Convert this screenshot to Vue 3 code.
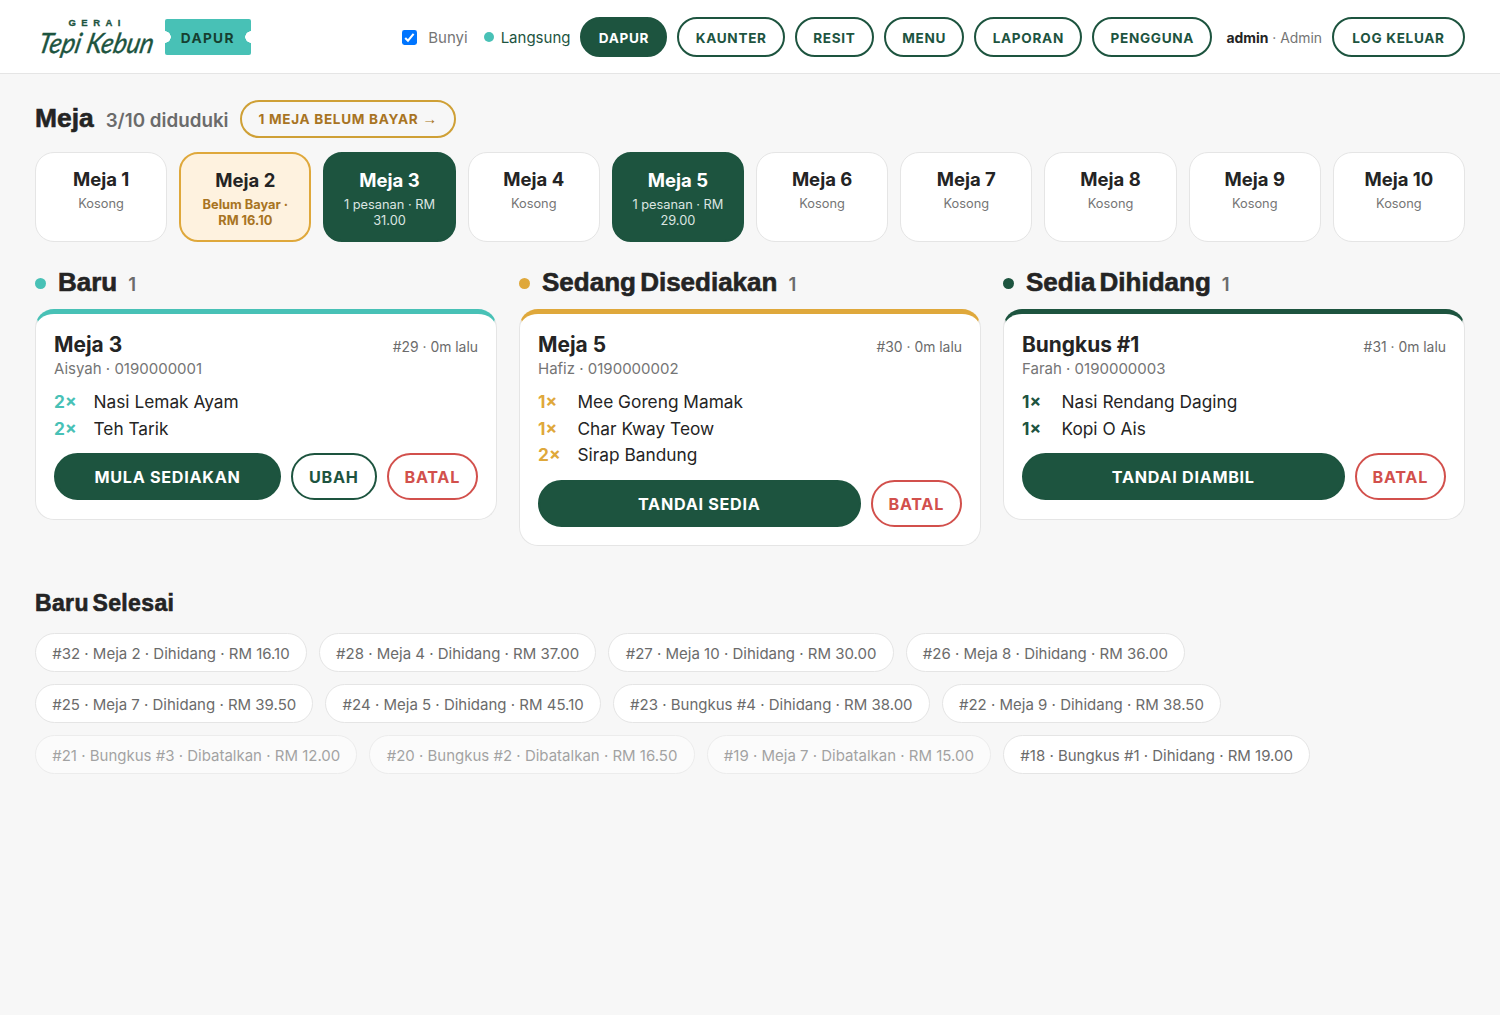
<template>
  <div class="page">
    <header class="topbar">
      <div class="brand">
        <svg class="logo" width="120" height="50" viewBox="0 0 120 50">
          <text class="logoSmall" x="33.5" y="13.5" textLength="52">GERAI</text>
          <text
            class="logoScript"
            transform="translate(2 41) skewX(-12)"
            textLength="115"
            lengthAdjust="spacingAndGlyphs"
          >Tepi Kebun</text>
        </svg>
        <span class="ticket">DAPUR</span>
      </div>
      <nav class="nav">
        <label class="sound">
          <input v-model="bunyi" type="checkbox" class="checkInput" />
          <svg class="check" width="15" height="15" viewBox="0 0 15 15">
            <rect width="15" height="15" rx="2.4" :fill="bunyi ? '#0075ff' : '#bbb'" />
            <path v-if="bunyi" d="M3.2 7.9 6 10.7 11.6 3.9" fill="none" stroke="#fff" stroke-width="2.1" />
          </svg>
          <span>Bunyi</span>
        </label>
        <span class="live"><i class="liveDot"></i>Langsung</span>
        <button
          v-for="m in menu"
          :key="m"
          class="navBtn"
          :class="{ active: m === halaman }"
          @click="halaman = m"
        >{{ m }}</button>
        <span class="user"><b>admin</b> · Admin</span>
        <button class="navBtn logout">Log Keluar</button>
      </nav>
    </header>

    <main class="content">
      <div class="mejaHead">
        <h2 class="display">Meja</h2>
        <span class="occupied">3/10 diduduki</span>
        <button class="unpaidBtn">1 Meja Belum Bayar <span class="arrow">→</span></button>
      </div>
      <div class="tables">
        <div v-for="t in meja" :key="t.no" class="table" :class="t.status">
          <strong>Meja {{ t.no }}</strong>
          <span>{{ t.info }}</span>
        </div>
      </div>

      <div class="board">
        <section v-for="k in kolum" :key="k.tajuk" class="column" :class="k.warna">
          <div class="columnHead">
            <i class="dot"></i>
            <h2 class="display">{{ k.tajuk }}</h2>
            <span class="count">1</span>
          </div>
          <article class="order">
            <div class="orderHead">
              <h3>{{ k.nama }}</h3>
              <span>#{{ k.id }} · 0m lalu</span>
            </div>
            <p class="customer">{{ k.pelanggan }}</p>
            <ul class="items">
              <li v-for="item in k.items" :key="item.nama"><b>{{ item.qty }}×</b>{{ item.nama }}</li>
            </ul>
            <div class="actions">
              <button class="btn primary">{{ k.aksi }}</button>
              <button v-if="k.ubah" class="btn edit">Ubah</button>
              <button class="btn danger">Batal</button>
            </div>
          </article>
        </section>
      </div>

      <h3 class="display doneTitle">Baru Selesai</h3>
      <div class="done">
        <span v-for="s in selesai" :key="s.id" class="chip" :class="{ cancelled: s.batal }">
          #{{ s.id }} · {{ s.nama }} · {{ s.batal ? 'Dibatalkan' : 'Dihidang' }} · RM {{ s.jumlah }}
        </span>
      </div>
    </main>
  </div>
</template>

<script setup>
import { ref } from "vue";

const bunyi = ref(true);
const halaman = ref("Dapur");
const menu = ["Dapur", "Kaunter", "Resit", "Menu", "Laporan", "Pengguna"];

const meja = ref([
  { no: 1, info: "Kosong" },
  { no: 2, info: "Belum Bayar · RM 16.10", status: "unpaid" },
  { no: 3, info: "1 pesanan · RM 31.00", status: "busy" },
  { no: 4, info: "Kosong" },
  { no: 5, info: "1 pesanan · RM 29.00", status: "busy" },
  { no: 6, info: "Kosong" },
  { no: 7, info: "Kosong" },
  { no: 8, info: "Kosong" },
  { no: 9, info: "Kosong" },
  { no: 10, info: "Kosong" },
]);

const kolum = ref([
  {
    tajuk: "Baru",
    warna: "teal",
    nama: "Meja 3",
    id: 29,
    pelanggan: "Aisyah · 0190000001",
    items: [
      { qty: 2, nama: "Nasi Lemak Ayam" },
      { qty: 2, nama: "Teh Tarik" },
    ],
    aksi: "Mula Sediakan",
    ubah: true,
  },
  {
    tajuk: "Sedang Disediakan",
    warna: "amber",
    nama: "Meja 5",
    id: 30,
    pelanggan: "Hafiz · 0190000002",
    items: [
      { qty: 1, nama: "Mee Goreng Mamak" },
      { qty: 1, nama: "Char Kway Teow" },
      { qty: 2, nama: "Sirap Bandung" },
    ],
    aksi: "Tandai Sedia",
  },
  {
    tajuk: "Sedia Dihidang",
    warna: "green",
    nama: "Bungkus #1",
    id: 31,
    pelanggan: "Farah · 0190000003",
    items: [
      { qty: 1, nama: "Nasi Rendang Daging" },
      { qty: 1, nama: "Kopi O Ais" },
    ],
    aksi: "Tandai Diambil",
  },
]);

const selesai = ref([
  { id: 32, nama: "Meja 2", jumlah: "16.10" },
  { id: 28, nama: "Meja 4", jumlah: "37.00" },
  { id: 27, nama: "Meja 10", jumlah: "30.00" },
  { id: 26, nama: "Meja 8", jumlah: "36.00" },
  { id: 25, nama: "Meja 7", jumlah: "39.50" },
  { id: 24, nama: "Meja 5", jumlah: "45.10" },
  { id: 23, nama: "Bungkus #4", jumlah: "38.00" },
  { id: 22, nama: "Meja 9", jumlah: "38.50" },
  { id: 21, nama: "Bungkus #3", jumlah: "12.00", batal: true },
  { id: 20, nama: "Bungkus #2", jumlah: "16.50", batal: true },
  { id: 19, nama: "Meja 7", jumlah: "15.00", batal: true },
  { id: 18, nama: "Bungkus #1", jumlah: "19.00" },
]);
</script>

<style>
body {
  background: #f7f7f7;
}
</style>

<style scoped>
* {
  box-sizing: border-box;
}
.page {
  min-height: 1015px;
  background: #f7f7f7;
  color: #242424;
  font-family: Inter, "Liberation Sans", sans-serif;
}
h2,
h3,
p,
ul {
  margin: 0;
  padding: 0;
}
button {
  font-family: inherit;
  font-weight: 700;
  text-transform: uppercase;
  white-space: nowrap;
  cursor: pointer;
}
.topbar {
  height: 74px;
  padding: 0 35px;
  background: #fff;
  border-bottom: 1px solid #e5e5e5;
  display: flex;
  align-items: center;
  justify-content: space-between;
}
.brand {
  display: flex;
  align-items: center;
  gap: 10px;
}
.logo {
  display: block;
  overflow: visible;
}
.logoSmall {
  font: 700 9.5px "Liberation Sans", sans-serif;
  fill: #1d543f;
  stroke: #1d543f;
  stroke-width: 0.3px;
}
.logoScript {
  font: italic 400 28px Lato, sans-serif;
  fill: #1d543f;
  stroke: #1d543f;
  stroke-width: 0.4px;
}
.ticket {
  width: 85.5px;
  height: 36px;
  padding-top: 2px;
  border-radius: 2px;
  background: radial-gradient(circle at 0 50%, #fff 5.5px, transparent 6px),
    radial-gradient(circle at 100% 50%, #fff 5.5px, transparent 6px), #48c1b6;
  color: #163f30;
  font-size: 13.7px;
  font-weight: 700;
  letter-spacing: 1.3px;
  display: flex;
  align-items: center;
  justify-content: center;
}
.nav {
  display: flex;
  align-items: center;
  gap: 10px;
}
.sound {
  display: flex;
  align-items: center;
  gap: 11px;
  margin-right: 6px;
  color: #757575;
  font-size: 15px;
}
.sound,
.live {
  padding-top: 1px;
}
.checkInput {
  position: absolute;
  opacity: 0;
}
.live {
  display: flex;
  align-items: center;
  gap: 7px;
  color: #1d543f;
  font-size: 15px;
}
.liveDot {
  width: 10px;
  height: 10px;
  border-radius: 50%;
  background: #48c1b6;
}
.navBtn {
  height: 40px;
  padding: 2px 16.3px 0;
  border: 2px solid #1d543f;
  border-radius: 20px;
  background: #fff;
  color: #1d543f;
  font-size: 13.55px;
  letter-spacing: 0.7px;
}
.navBtn.active {
  background: #1d543f;
  color: #fff;
}
.navBtn.logout {
  padding: 2px 18.3px 0;
}
.user {
  margin-left: 4px;
  padding-top: 2px;
  font-size: 13.9px;
  color: #757575;
}
.user b {
  color: #242424;
}
.content {
  padding: 26px 35px;
}
.display {
  font-family: "Liberation Sans", Arial, sans-serif;
  font-weight: 700;
  font-size: 26px;
  line-height: 30px;
  word-spacing: -3px;
  -webkit-text-stroke: 0.6px currentColor;
}
.mejaHead {
  height: 38px;
  display: flex;
  align-items: center;
  gap: 12px;
}
.mejaHead .display {
  font-size: 26.4px;
  padding-bottom: 2px;
}
.occupied {
  font-size: 18.8px;
  font-weight: 600;
  color: #6b6b6b;
  padding-top: 2px;
}
.unpaidBtn {
  height: 38px;
  padding: 0 16px;
  border: 2px solid #cfa036;
  border-radius: 19px;
  background: transparent;
  color: #a87423;
  font-size: 13.55px;
  letter-spacing: 0.7px;
}
.arrow {
  font-family: "Liberation Sans", sans-serif;
  font-size: 15px;
  font-weight: 400;
  line-height: 1;
}
.tables {
  margin-top: 14px;
  display: grid;
  grid-template-columns: repeat(10, 1fr);
  gap: 12px;
}
.table {
  height: 90px;
  padding: 14px 14px;
  border: 1px solid #e5e5e5;
  border-radius: 19px;
  background: #fff;
  text-align: center;
}
.table strong {
  display: block;
  font-size: 18.5px;
  line-height: 24px;
}
.table span {
  display: block;
  margin-top: 5px;
  font-size: 12.8px;
  line-height: 16px;
  color: #757575;
}
.table.unpaid {
  border: 2px solid #dfa83b;
  background: #fef2df;
}
.table.unpaid span {
  color: #a87423;
  font-weight: 700;
}
.table.busy {
  border: 2px solid #1d543f;
  background: #1d543f;
  color: #fff;
}
.table.busy span {
  color: #dbe5e1;
}
.board {
  margin-top: 24px;
  display: grid;
  grid-template-columns: repeat(3, 1fr);
  gap: 22px;
  align-items: start;
}
.teal {
  --warna: #48c1b6;
}
.amber {
  --warna: #dfa83b;
}
.green {
  --warna: #1d543f;
}
.columnHead {
  height: 33px;
  display: flex;
  align-items: center;
  gap: 12px;
}
.columnHead .display {
  padding-bottom: 2px;
}
.dot {
  width: 11px;
  height: 11px;
  margin-top: 2px;
  border-radius: 50%;
  background: var(--warna);
}
.count {
  margin-left: -1px;
  padding-top: 3px;
  font-size: 18.5px;
  font-weight: 600;
  color: #6b6b6b;
}
.order {
  margin-top: 10px;
  padding: 17px 18px 18.5px;
  background: #fff;
  border: 1px solid #e5e5e5;
  border-top: 5px solid var(--warna);
  border-radius: 19px;
}
.orderHead {
  display: flex;
  align-items: baseline;
  justify-content: space-between;
}
.orderHead h3 {
  font-size: 20.9px;
  line-height: 27px;
}
.orderHead span {
  font-size: 13.9px;
  color: #6b6b6b;
}
.customer {
  font-size: 15px;
  line-height: 20px;
  padding-top: 1px;
  color: #757575;
}
.items {
  margin-top: 10px;
  list-style: none;
}
.items li {
  display: flex;
  font-size: 17.3px;
  line-height: 26.6px;
}
.items b {
  width: 39.5px;
  color: var(--warna);
}
.actions {
  margin-top: 11.2px;
  display: flex;
  gap: 10px;
}
.btn {
  height: 47px;
  padding: 1px 16px 0;
  border: 2px solid #1d543f;
  border-radius: 24px;
  background: #fff;
  color: #1d543f;
  font-size: 16.2px;
  letter-spacing: 0.7px;
}
.btn.primary {
  flex: 1;
  background: #1d543f;
  color: #fff;
}
.btn.danger {
  border-color: #d2504c;
  color: #d2504c;
}
.doneTitle {
  margin-top: 42px;
  font-size: 23px;
  letter-spacing: 0.35px;
}
.done {
  margin-top: 14.8px;
  display: flex;
  flex-wrap: wrap;
  gap: 12px;
}
.chip {
  height: 39px;
  padding: 0 16.2px;
  border: 1px solid #e5e5e5;
  border-radius: 20px;
  background: #fff;
  color: #6b6b6b;
  font-size: 15px;
  line-height: 39px;
  white-space: nowrap;
}
.chip.cancelled {
  opacity: 0.6;
}
</style>
